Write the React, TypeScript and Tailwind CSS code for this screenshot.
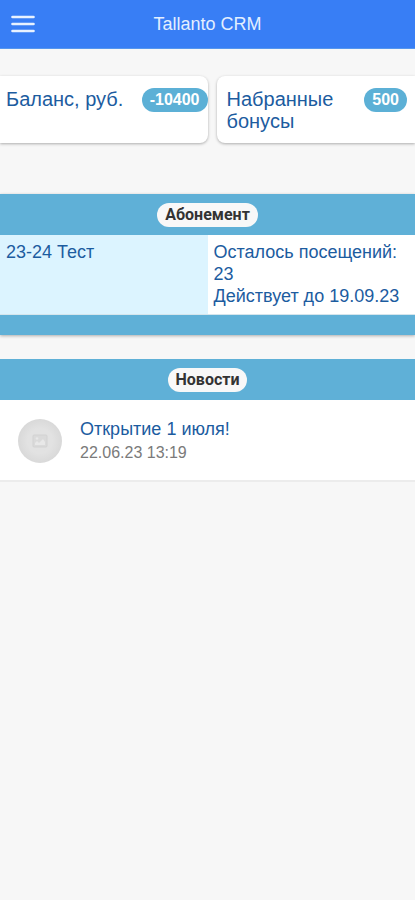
import type { ReactNode } from "react";

function Badge({ children }: { children: ReactNode }) {
  return (
    <span className="h-6 shrink-0 rounded-full bg-[#5cb0d6] px-2 text-base leading-6 font-bold text-white">
      {children}
    </span>
  );
}

function SectionHeader({ title }: { title: string }) {
  return (
    <div className="flex h-[41px] items-center justify-center bg-[#5fb0d7]">
      <h2 className="h-6 rounded-full bg-[#f8f8f8] px-2 font-['Roboto','Liberation_Sans',sans-serif] text-base leading-6 font-bold text-[#333]">
        {title}
      </h2>
    </div>
  );
}

function ImagePlaceholder() {
  return (
    <div className="flex size-11 shrink-0 items-center justify-center rounded-full bg-radial from-[#e2e2e2] from-40% to-[#d0d0d0]">
      <svg viewBox="0 0 16 14" className="h-3.5 w-4" aria-hidden="true">
        <rect x="1" y="1" width="14" height="12" rx="1" fill="#dadada" stroke="#d2d2d2" />
        <circle cx="5" cy="4.5" r="1.3" fill="#e8e8e8" />
        <path d="M3 11V9l2-2 2 2 4-4 2 3v3z" fill="#e8e8e8" />
      </svg>
    </div>
  );
}

export default function App() {
  return (
    <div className="min-h-screen bg-[#f7f7f7] font-['Liberation_Sans',Arial,sans-serif] text-[#1c5c9f]">
      <header className="grid h-[49px] grid-cols-[48px_1fr_48px] items-center border-b border-[#5596ee] bg-[#387ef5]">
        <button type="button" aria-label="Меню" className="flex h-12 items-center pl-[11px]">
          <svg viewBox="0 0 24 18" className="h-[18px] w-6" aria-hidden="true">
            <path d="M1.5 2h21M1.5 9h21M1.5 16h21" stroke="#e8f2ff" strokeWidth="2.6" strokeLinecap="round" />
          </svg>
        </button>
        <h1 className="text-center text-lg text-[#e3efff]">Tallanto CRM</h1>
      </header>

      <main>
        <section className="grid grid-cols-2 pt-[27px]">
          <div className="flex h-[67px] items-start justify-between overflow-hidden rounded-r-lg bg-white pt-3 pl-1.5 shadow-[0_1px_3px_rgba(0,0,0,0.3)]">
            <span className="text-xl leading-[22px]">Баланс, руб.</span>
            <Badge>-10400</Badge>
          </div>
          <div className="ml-[9px] flex h-[67px] items-start justify-between overflow-hidden rounded-l-lg bg-white pt-3 pr-2 pl-2.5 shadow-[0_1px_3px_rgba(0,0,0,0.3)]">
            <span className="w-28 text-xl leading-[22px]">Набранные бонусы</span>
            <Badge>500</Badge>
          </div>
        </section>

        <section className="mt-[51px] shadow-[0_1px_3px_rgba(0,0,0,0.3)]">
          <SectionHeader title="Абонемент" />
          <div className="grid grid-cols-2 border-b border-[#d5e5ec] bg-white text-lg leading-[22px]">
            <div className="bg-[#dcf4ff] px-1.5 pt-1.5 pb-[7px]">23-24 Тест</div>
            <div className="px-1.5 pt-1.5 pb-[7px]">
              <p>Осталось посещений: 23</p>
              <p>Действует до 19.09.23</p>
            </div>
          </div>
          <div className="h-5 bg-[#5fb0d7]" />
        </section>

        <section className="mt-6">
          <SectionHeader title="Новости" />
          <a href="#news" className="flex items-center gap-[18px] border-b-2 border-[#ececec] bg-white px-[18px] pt-[17px] pb-[15px]">
            <ImagePlaceholder />
            <span className="flex flex-col">
              <span className="text-lg leading-6">Открытие 1 июля!</span>
              <time className="text-base leading-6 text-[#7a7a7a]">22.06.23 13:19</time>
            </span>
          </a>
        </section>
      </main>
    </div>
  );
}
